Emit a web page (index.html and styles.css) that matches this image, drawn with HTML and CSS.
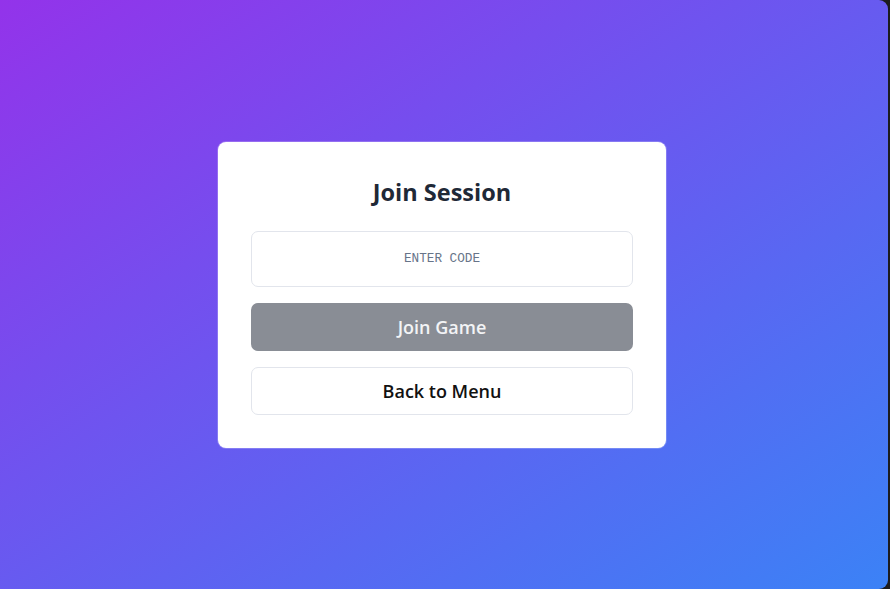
FILE: index.html
```html
<!DOCTYPE html>
<html lang="en">
<head>
<meta charset="utf-8">
<title>Join Session</title>
<link rel="stylesheet" href="styles.css">
</head>
<body>
<main class="screen">
  <section class="card">
    <h1 class="title">Join Session</h1>
    <input class="code-input" type="text" placeholder="ENTER CODE">
    <button class="btn btn-join" type="button">Join Game</button>
    <button class="btn btn-back" type="button">Back to Menu</button>
  </section>
</main>
</body>
</html>
```
FILE: styles.css
```css
html, body {
  margin: 0;
  padding: 0;
  height: 100%;
}
html {
  background: #1c1c1e;
}
body {
  font-family: "Open Sans", "Noto Sans", sans-serif;
}
.screen {
  width: 888px;
  height: 589px;
  box-sizing: border-box;
  padding-right: 4px;
  border-radius: 0 9px 9px 0;
  background: linear-gradient(to bottom right, #9333ea, #3b82f6);
  display: flex;
  align-items: center;
  justify-content: center;
}
.card {
  width: 448px;
  box-sizing: border-box;
  background: #ffffff;
  border-radius: 8px;
  padding: 34px 33px 33px;
  display: flex;
  flex-direction: column;
  gap: 16px;
  box-shadow: 0 0 0 1px rgba(255,255,255,0.2);
}
.title {
  margin: 0 0 7px;
  text-align: center;
  font-size: 23.5px;
  line-height: 32px;
  font-weight: 700;
  color: #1f2937;
}
.code-input {
  height: 56px;
  box-sizing: border-box;
  border: 1px solid #e2e5ec;
  border-radius: 7px;
  text-align: center;
  font-family: "Liberation Mono", "DejaVu Sans Mono", monospace;
  font-size: 12.7px;
  color: #374151;
  outline: none;
  background: #ffffff;
}
.code-input::placeholder {
  color: #677489;
}
.btn {
  height: 48px;
  box-sizing: border-box;
  border-radius: 7px;
  font-family: "Open Sans", "Noto Sans", sans-serif;
  font-size: 18px;
  font-weight: 600;
  cursor: pointer;
}
.btn-join {
  border: none;
  background: #898d95;
  color: #f3f4f6;
}
.btn-back {
  background: #ffffff;
  border: 1px solid #e2e5ec;
  color: #111111;
}
```
